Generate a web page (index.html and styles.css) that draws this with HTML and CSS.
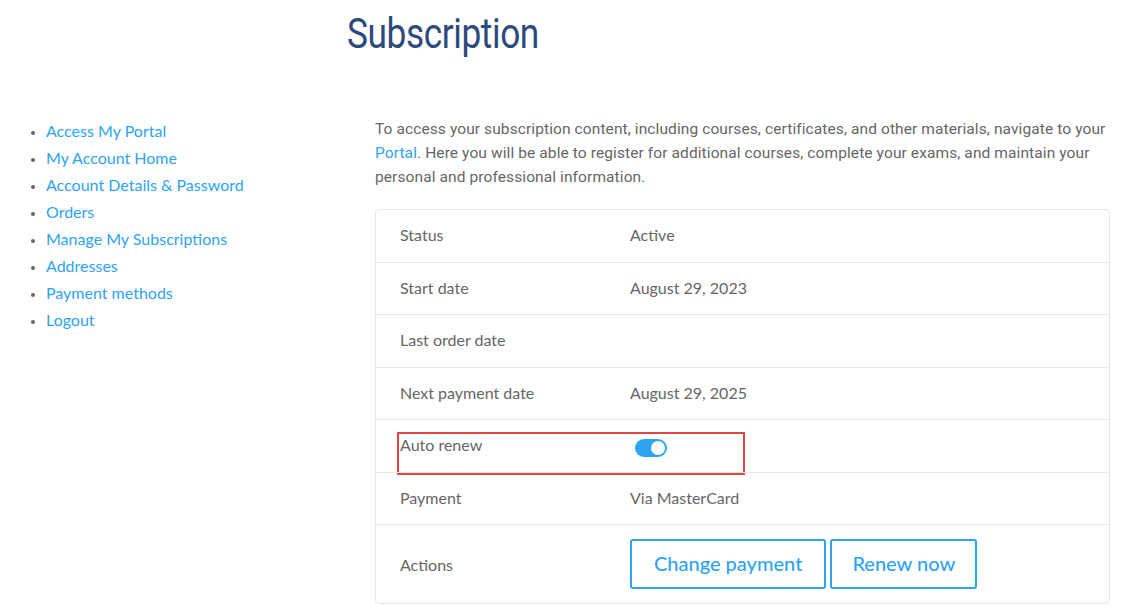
FILE: index.html
```html
<!DOCTYPE html>
<html>
<head>
<meta charset="utf-8">
<link rel="stylesheet" href="styles.css">
</head>
<body>
<header class="page-head">
  <h1 class="title">Subscription</h1>
</header>
<div class="layout">
  <nav class="sidebar">
    <ul class="nav-list">
      <li><a href="#">Access My Portal</a></li>
      <li><a href="#">My Account Home</a></li>
      <li><a href="#">Account Details &amp; Password</a></li>
      <li><a href="#">Orders</a></li>
      <li><a href="#">Manage My Subscriptions</a></li>
      <li><a href="#">Addresses</a></li>
      <li><a href="#">Payment methods</a></li>
      <li><a href="#">Logout</a></li>
    </ul>
  </nav>
  <main class="main">
    <p class="intro">To access your subscription content, including courses, certificates, and other materials, navigate to your <a href="#">Portal</a>. Here you will be able to register for additional courses, complete your exams, and maintain your personal and professional information.</p>
    <div class="card">
      <div class="row"><div class="label">Status</div><div class="value">Active</div></div>
      <div class="row"><div class="label">Start date</div><div class="value">August 29, 2023</div></div>
      <div class="row"><div class="label">Last order date</div><div class="value"></div></div>
      <div class="row"><div class="label">Next payment date</div><div class="value">August 29, 2025</div></div>
      <div class="row row-auto">
        <div class="label label-top">Auto renew</div>
        <div class="value"><span class="toggle"><span class="knob"></span></span></div>
        <div class="highlight"></div>
      </div>
      <div class="row"><div class="label">Payment</div><div class="value">Via MasterCard</div></div>
      <div class="row row-actions">
        <div class="label">Actions</div>
        <div class="value actions">
          <a class="btn" href="#">Change payment</a>
          <a class="btn btn-narrow" href="#">Renew now</a>
        </div>
      </div>
    </div>
  </main>
</div>
</body>
</html>
```

FILE: styles.css
```css
* { box-sizing: border-box; }
body {
  margin: 0;
  background: #fff;
  font-family: "Lato", "Open Sans", sans-serif;
  color: #666;
  font-size: 16px;
}
a { color: #2ea3f2; text-decoration: none; }
.page-head {
  padding-left: 347px;
  height: 110px;
}
.title {
  display: inline-block;
  margin: 0;
  padding-top: 9px;
  font-family: "Roboto", sans-serif;
  font-weight: 400;
  font-size: 42px;
  line-height: 50px;
  letter-spacing: -0.5px;
  color: #2c4a7c;
  transform: scaleX(0.84);
  transform-origin: left center;
}
.layout {
  display: flex;
}
.sidebar {
  width: 375px;
  flex: none;
}
.nav-list {
  margin: 7px 0 0 0;
  padding-left: 46px;
  list-style: disc;
  color: #666;
}
.nav-list li {
  line-height: 27px;
  font-size: 16px;
}
.nav-list li::marker { font-size: 12px; }
.main {
  width: 735px;
}
.intro {
  margin: 7px 0 20px;
  font-family: "Roboto", sans-serif;
  font-size: 15.5px;
  line-height: 24px;
  letter-spacing: 0.1px;
  color: #666;
}
.card {
  border: 1px solid #e6e6e6;
  border-radius: 4px;
}
.row {
  position: relative;
  display: flex;
  align-items: center;
  height: 52.5px;
  border-top: 1px solid #e6e6e6;
  padding-left: 24px;
  padding-bottom: 2px;
}
.row:first-child { border-top: none; height: 51.5px; }
.label { width: 230px; flex: none; }
.label-top { align-self: flex-start; padding-top: 15px; }
.value { display: flex; align-items: center; }
.toggle {
  display: inline-block;
  position: relative;
  width: 32px;
  height: 18px;
  border-radius: 9px;
  background: #2ea3f2;
  margin-left: 5px;
  margin-top: 7px;
}
.knob {
  position: absolute;
  top: 2px;
  right: 2px;
  width: 14px;
  height: 14px;
  border-radius: 50%;
  background: #fff;
}
.highlight {
  position: absolute;
  left: 21px;
  top: 12px;
  width: 348px;
  height: 43px;
  border: 2px solid #e34444;
}
.row-actions { height: 79px; padding-bottom: 0; }
.actions { gap: 4px; }
.btn {
  display: inline-flex;
  align-items: center;
  justify-content: center;
  height: 50px;
  border: 2px solid #2ea3f2;
  border-radius: 3px;
  padding: 0 22px 2px;
  font-size: 20px;
  font-weight: 500;
}
.btn-narrow { padding: 0 20px 2px; }
```
